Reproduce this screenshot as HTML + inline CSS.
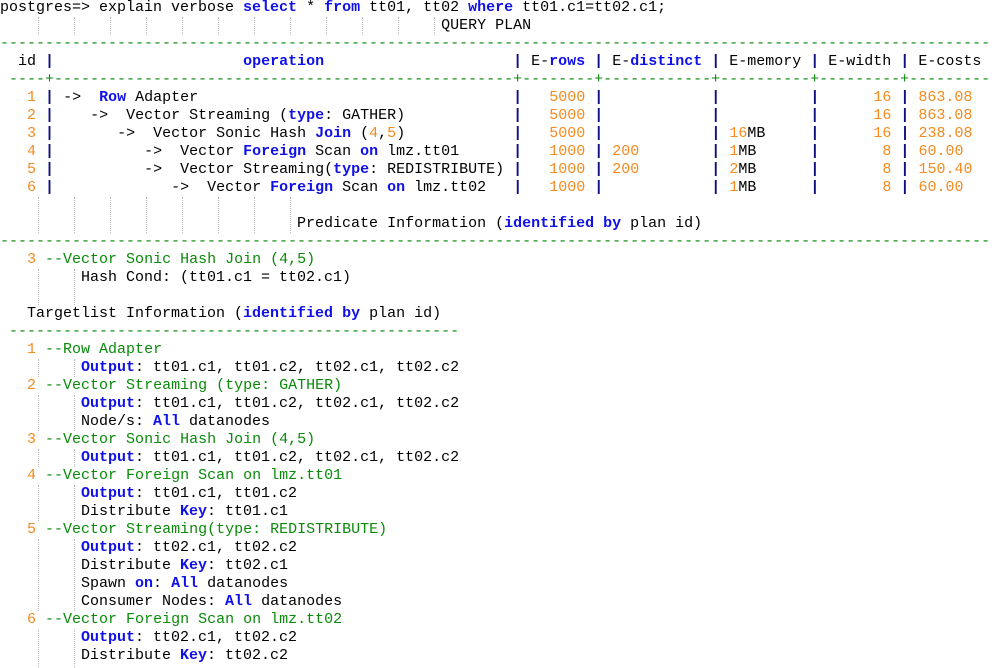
<!DOCTYPE html>
<html><head><meta charset="utf-8">
<style>
html,body{margin:0;padding:0;background:#fff;width:1004px;height:668px;overflow:hidden}
#w{position:relative;width:1004px;height:668px;font-family:"Liberation Mono",monospace;font-size:15px;color:#000}
.l{position:absolute;left:0;height:18px;line-height:18px;white-space:pre}
.k{color:#1010e8;font-weight:bold}
.n{color:#f58a1f}
.g{color:#0a8a0a}
.p{color:#101080;font-weight:bold}
.gd{position:absolute;width:0;border-left:1px dotted #bdbdbd}
</style></head><body><div id="w">
<div class="l" style="top:-1px">postgres=&gt; explain verbose <span class="k">select</span> * <span class="k">from</span> tt01, tt02 <span class="k">where</span> tt01.c1=tt02.c1;</div>
<div class="l" style="top:17px">                                                 QUERY PLAN</div>
<div class="l g" style="top:35px">--------------------------------------------------------------------------------------------------------------</div>
<div class="l" style="top:53px">  id <span class="p">|</span>                     <span class="k">operation</span>                     <span class="p">|</span> E-<span class="k">rows</span> <span class="p">|</span> E-<span class="k">distinct</span> <span class="p">|</span> E-memory <span class="p">|</span> E-width <span class="p">|</span> E-costs</div>
<div class="l g" style="top:71px"> ----+---------------------------------------------------+--------+------------+----------+---------+---------</div>
<div class="l" style="top:89px">   <span class="n">1</span> <span class="p">|</span> -&gt;  <span class="k">Row</span> Adapter                                   <span class="p">|</span>   <span class="n">5000</span> <span class="p">|</span>            <span class="p">|</span>          <span class="p">|</span>      <span class="n">16</span> <span class="p">|</span> <span class="n">863.08</span></div>
<div class="l" style="top:107px">   <span class="n">2</span> <span class="p">|</span>    -&gt;  Vector Streaming (<span class="k">type</span>: GATHER)            <span class="p">|</span>   <span class="n">5000</span> <span class="p">|</span>            <span class="p">|</span>          <span class="p">|</span>      <span class="n">16</span> <span class="p">|</span> <span class="n">863.08</span></div>
<div class="l" style="top:125px">   <span class="n">3</span> <span class="p">|</span>       -&gt;  Vector Sonic Hash <span class="k">Join</span> (<span class="n">4</span>,<span class="n">5</span>)            <span class="p">|</span>   <span class="n">5000</span> <span class="p">|</span>            <span class="p">|</span> <span class="n">16</span>MB     <span class="p">|</span>      <span class="n">16</span> <span class="p">|</span> <span class="n">238.08</span></div>
<div class="l" style="top:143px">   <span class="n">4</span> <span class="p">|</span>          -&gt;  Vector <span class="k">Foreign</span> Scan <span class="k">on</span> lmz.tt01      <span class="p">|</span>   <span class="n">1000</span> <span class="p">|</span> <span class="n">200</span>        <span class="p">|</span> <span class="n">1</span>MB      <span class="p">|</span>       <span class="n">8</span> <span class="p">|</span> <span class="n">60.00</span></div>
<div class="l" style="top:161px">   <span class="n">5</span> <span class="p">|</span>          -&gt;  Vector Streaming(<span class="k">type</span>: REDISTRIBUTE) <span class="p">|</span>   <span class="n">1000</span> <span class="p">|</span> <span class="n">200</span>        <span class="p">|</span> <span class="n">2</span>MB      <span class="p">|</span>       <span class="n">8</span> <span class="p">|</span> <span class="n">150.40</span></div>
<div class="l" style="top:179px">   <span class="n">6</span> <span class="p">|</span>             -&gt;  Vector <span class="k">Foreign</span> Scan <span class="k">on</span> lmz.tt02   <span class="p">|</span>   <span class="n">1000</span> <span class="p">|</span>            <span class="p">|</span> <span class="n">1</span>MB      <span class="p">|</span>       <span class="n">8</span> <span class="p">|</span> <span class="n">60.00</span></div>
<div class="l" style="top:215px">                                 Predicate Information (<span class="k">identified by</span> plan id)</div>
<div class="l g" style="top:233px">--------------------------------------------------------------------------------------------------------------</div>
<div class="l" style="top:251px">   <span class="n">3</span> <span class="g">--Vector Sonic Hash Join (4,5)</span></div>
<div class="l" style="top:269px">         Hash Cond: (tt01.c1 = tt02.c1)</div>
<div class="l" style="top:305px">   Targetlist Information (<span class="k">identified by</span> plan id)</div>
<div class="l g" style="top:323px"> --------------------------------------------------</div>
<div class="l" style="top:341px">   <span class="n">1</span> <span class="g">--Row Adapter</span></div>
<div class="l" style="top:359px">         <span class="k">Output</span>: tt01.c1, tt01.c2, tt02.c1, tt02.c2</div>
<div class="l" style="top:377px">   <span class="n">2</span> <span class="g">--Vector Streaming (type: GATHER)</span></div>
<div class="l" style="top:395px">         <span class="k">Output</span>: tt01.c1, tt01.c2, tt02.c1, tt02.c2</div>
<div class="l" style="top:413px">         Node/s: <span class="k">All</span> datanodes</div>
<div class="l" style="top:431px">   <span class="n">3</span> <span class="g">--Vector Sonic Hash Join (4,5)</span></div>
<div class="l" style="top:449px">         <span class="k">Output</span>: tt01.c1, tt01.c2, tt02.c1, tt02.c2</div>
<div class="l" style="top:467px">   <span class="n">4</span> <span class="g">--Vector Foreign Scan on lmz.tt01</span></div>
<div class="l" style="top:485px">         <span class="k">Output</span>: tt01.c1, tt01.c2</div>
<div class="l" style="top:503px">         Distribute <span class="k">Key</span>: tt01.c1</div>
<div class="l" style="top:521px">   <span class="n">5</span> <span class="g">--Vector Streaming(type: REDISTRIBUTE)</span></div>
<div class="l" style="top:539px">         <span class="k">Output</span>: tt02.c1, tt02.c2</div>
<div class="l" style="top:557px">         Distribute <span class="k">Key</span>: tt02.c1</div>
<div class="l" style="top:575px">         Spawn <span class="k">on</span>: <span class="k">All</span> datanodes</div>
<div class="l" style="top:593px">         Consumer Nodes: <span class="k">All</span> datanodes</div>
<div class="l" style="top:611px">   <span class="n">6</span> <span class="g">--Vector Foreign Scan on lmz.tt02</span></div>
<div class="l" style="top:629px">         <span class="k">Output</span>: tt02.c1, tt02.c2</div>
<div class="l" style="top:647px">         Distribute <span class="k">Key</span>: tt02.c2</div>

<!-- guides line 1 -->
<div class="gd" style="left:38px;top:17px;height:18px"></div>
<div class="gd" style="left:74px;top:17px;height:18px"></div>
<div class="gd" style="left:110px;top:17px;height:18px"></div>
<div class="gd" style="left:146px;top:17px;height:18px"></div>
<div class="gd" style="left:182px;top:17px;height:18px"></div>
<div class="gd" style="left:218px;top:17px;height:18px"></div>
<div class="gd" style="left:254px;top:17px;height:18px"></div>
<div class="gd" style="left:290px;top:17px;height:18px"></div>
<div class="gd" style="left:326px;top:17px;height:18px"></div>
<div class="gd" style="left:362px;top:17px;height:18px"></div>
<div class="gd" style="left:398px;top:17px;height:18px"></div>
<div class="gd" style="left:434px;top:17px;height:18px"></div>
<!-- guides lines 11-12 -->
<div class="gd" style="left:38px;top:197px;height:36px"></div>
<div class="gd" style="left:74px;top:197px;height:36px"></div>
<div class="gd" style="left:110px;top:197px;height:36px"></div>
<div class="gd" style="left:146px;top:197px;height:36px"></div>
<div class="gd" style="left:182px;top:197px;height:36px"></div>
<div class="gd" style="left:218px;top:197px;height:36px"></div>
<div class="gd" style="left:254px;top:197px;height:36px"></div>
<div class="gd" style="left:290px;top:197px;height:36px"></div>
<!-- indent guides -->
<div class="gd" style="left:38px;top:269px;height:36px"></div>
<div class="gd" style="left:74px;top:269px;height:36px"></div>
<div class="gd" style="left:38px;top:359px;height:18px"></div>
<div class="gd" style="left:74px;top:359px;height:18px"></div>
<div class="gd" style="left:38px;top:395px;height:36px"></div>
<div class="gd" style="left:74px;top:395px;height:36px"></div>
<div class="gd" style="left:38px;top:449px;height:18px"></div>
<div class="gd" style="left:74px;top:449px;height:18px"></div>
<div class="gd" style="left:38px;top:485px;height:36px"></div>
<div class="gd" style="left:74px;top:485px;height:36px"></div>
<div class="gd" style="left:38px;top:539px;height:72px"></div>
<div class="gd" style="left:74px;top:539px;height:72px"></div>
<div class="gd" style="left:38px;top:629px;height:39px"></div>
<div class="gd" style="left:74px;top:629px;height:39px"></div>
</div></body></html>
